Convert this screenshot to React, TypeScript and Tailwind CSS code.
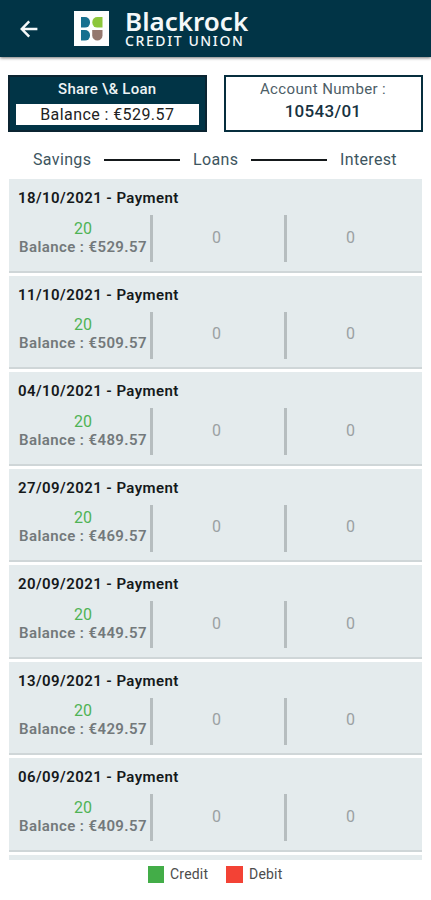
import React from "react";

type Transaction = {
    date: string;
    savings: number;
    balance: string;
    loans: number;
    interest: number;
};

const transactions: Transaction[] = [
    { date: "18/10/2021", savings: 20, balance: "€529.57", loans: 0, interest: 0 },
    { date: "11/10/2021", savings: 20, balance: "€509.57", loans: 0, interest: 0 },
    { date: "04/10/2021", savings: 20, balance: "€489.57", loans: 0, interest: 0 },
    { date: "27/09/2021", savings: 20, balance: "€469.57", loans: 0, interest: 0 },
    { date: "20/09/2021", savings: 20, balance: "€449.57", loans: 0, interest: 0 },
    { date: "13/09/2021", savings: 20, balance: "€429.57", loans: 0, interest: 0 },
    { date: "06/09/2021", savings: 20, balance: "€409.57", loans: 0, interest: 0 },
];

function Logo() {
    return (
        <svg width="35" height="35" viewBox="0 0 35 35" className="shrink-0">
            <rect width="35" height="35" fill="#fdfefe" />
            <path d="M7 6h4a5 5 0 0 1 5 5v.6a5 5 0 0 1-5 5H7z" fill="#17708f" />
            <path d="M28.5 6v10.6h-5.2a5 5 0 0 1-5-5V11a5 5 0 0 1 5-5z" fill="#8cc63a" />
            <path d="M7 19h4a5 5 0 0 1 5 5v.6a5 5 0 0 1-5 5H7z" fill="#17708f" />
            <path d="M18.2 19h10.3v5.4a5.15 5.15 0 0 1-10.3 0z" fill="#94786e" />
        </svg>
    );
}

function Header() {
    return (
        <header className="flex h-[57px] shrink-0 items-center bg-[#013446] shadow-[0_1px_3px_rgba(0,0,0,0.55)]">
            <svg width="18" height="18" viewBox="0 0 18 18" className="ml-5 shrink-0" fill="none" stroke="#f4f8f9" strokeWidth="2.5">
                <path d="M17.4 9H2M9.2 1.4 1.8 9l7.4 7.6" />
            </svg>
            <div className="ml-9 flex items-center gap-4">
                <Logo />
                <div className="pb-px font-['Noto_Sans',sans-serif] text-[#f4f8f9]">
                    <p className="text-[26px] leading-[24px] font-semibold whitespace-nowrap">Blackrock</p>
                    <p className="text-[14px] leading-[15px] font-medium tracking-[1.6px] whitespace-nowrap">CREDIT UNION</p>
                </div>
            </div>
        </header>
    );
}

function TransactionCard({ item }: { item: Transaction }) {
    return (
        <div className="h-[93.5px] shrink-0 border-b-2 border-[#cfd6d8] bg-[#e4ebed] pt-[9px]">
            <p className="pl-[9px] text-[15px] leading-5 font-semibold tracking-[0.42px] text-[#15191b]">
                {item.date} - Payment
            </p>
            <div className="mt-[7px] flex h-[47px] items-center text-[16px] text-[#9ba1a3]">
                <div className="w-[141px] pb-[3px] pl-[7px] text-center">
                    <p className="leading-[19px] text-[#4fb355]">{item.savings}</p>
                    <p className="text-[15px] leading-[18px] font-semibold tracking-[0.4px] whitespace-nowrap text-[#73797b]">
                        Balance : {item.balance}
                    </p>
                </div>
                <div className="h-full w-[3px] bg-[#b6bdbf]" />
                <p className="w-[131px] pr-1 pb-[2px] text-center">{item.loans}</p>
                <div className="h-full w-[3px] bg-[#b6bdbf]" />
                <p className="w-[131px] pr-1 pb-[2px] text-center">{item.interest}</p>
            </div>
        </div>
    );
}

export default function App() {
    return (
        <div className="flex h-[900px] w-[431px] flex-col overflow-hidden bg-white font-[Roboto,sans-serif]">
            <Header />

            <section className="mt-[18px] ml-2 flex gap-[17px]">
                <div className="h-[57px] w-[198.5px] border-2 border-[#0b2431] bg-[#013446] px-1.5 pt-[3px] text-center">
                    <p className="text-[15px] leading-[18px] font-medium tracking-[0.25px] text-[#eef3f5]">Share \& Loan</p>
                    <p className="mt-[6px] h-[21px] bg-white text-[16px] leading-[21px] tracking-[0.42px] text-[#222]">
                        Balance : €529.57
                    </p>
                </div>
                <div className="h-[57px] w-[199px] border-2 border-[#062e3e] bg-white pt-[2px] text-center">
                    <p className="text-[15px] leading-[20px] tracking-[0.38px] text-[#4d5e67]">Account Number :</p>
                    <p className="mt-px text-[17px] leading-[22px] font-medium tracking-[0.3px] text-[#173241]">10543/01</p>
                </div>
            </section>

            <div className="mt-[18px] flex h-5 items-center pl-[33px] text-[16px] leading-5 tracking-[0.35px] text-[#3d5560]">
                <span className="w-[71px]">Savings</span>
                <span className="h-[2px] w-[76px] bg-[#15191b]" />
                <span className="w-[71px] pl-[13px]">Loans</span>
                <span className="h-[2px] w-[76px] bg-[#15191b]" />
                <span className="pl-[13px]">Interest</span>
            </div>

            <main className="mt-[9px] ml-[9px] flex h-[681px] w-[413px] shrink-0 flex-col gap-[3px] overflow-hidden">
                {transactions.map((item) => (
                    <TransactionCard key={item.date} item={item} />
                ))}
                <div className="h-5 shrink-0 bg-[#e4ebed]" />
            </main>

            <footer className="mt-[5px] flex items-center pl-[148px] text-[14px] leading-[18px] tracking-[0.2px] text-[#4c4c4c]">
                <span className="h-[17px] w-4 bg-[#43ad48]" />
                <span className="ml-[6px] w-[56px]">Credit</span>
                <span className="h-[17px] w-[17px] bg-[#f34235]" />
                <span className="ml-[6px]">Debit</span>
            </footer>
        </div>
    );
}
